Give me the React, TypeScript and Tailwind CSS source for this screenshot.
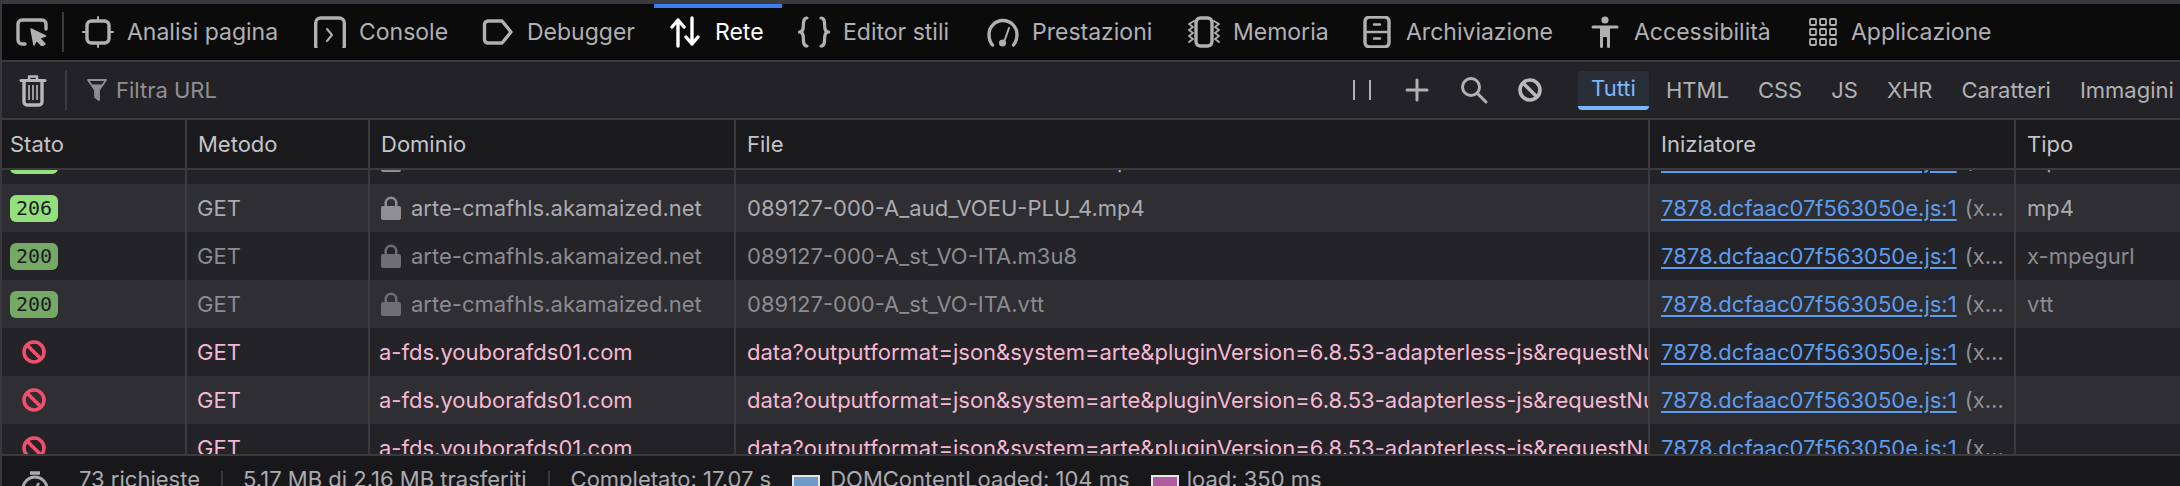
import type { ReactNode } from 'react';

const sans = "font-['Inter','Noto_Sans',sans-serif]";

function Ico({ w = 32, h = 32, children, className = '' }: { w?: number; h?: number; children: ReactNode; className?: string }) {
  return (
    <svg width={w} height={h} viewBox={`0 0 ${w} ${h}`} fill="none" stroke="currentColor" strokeWidth="3.4" strokeLinecap="round" strokeLinejoin="round" className={`shrink-0 ${className}`}>
      {children}
    </svg>
  );
}

const PickerIcon = () => (
  <Ico h={28} w={32}>
    <path d="M9 26H6a4 4 0 0 1-4-4V6a4 4 0 0 1 4-4h20a4 4 0 0 1 4 4v5" />
    <path d="M15 11l14.5 7-6 2 5.5 6-3 2-5.5-6-2.5 5z" fill="currentColor" strokeWidth="1.5" />
  </Ico>
);

const TargetIcon = () => (
  <Ico>
    <rect x="5" y="5" width="22" height="22" rx="4.5" />
    <path d="M16 1v3M16 28v3M1 16h3M28 16h3" strokeWidth="2" />
  </Ico>
);

const ConsoleIcon = () => (
  <Ico>
    <rect x="2" y="2" width="28" height="35" rx="5" className="hidden" />
    <rect x="1.7" y="2" width="28.6" height="33" rx="5" />
    <path d="M13 13l5 6-5 6" strokeWidth="2" />
  </Ico>
);

const DebuggerIcon = () => (
  <Ico>
    <path d="M6 5h14l9 11-9 11H6a3.5 3.5 0 0 1-3.5-3.500V8.500A3.500 3.500 0 0 1 6 5z" />
  </Ico>
);

const NetworkIcon = () => (
  <Ico>
    <path d="M8 30V4M2 11l6-7 6 7M22 2v26M16 21l6 7 6-7" strokeWidth="3.4" />
  </Ico>
);

const StyleIcon = () => (
  <Ico>
    <path d="M9 2C4 2 6 10 5 13c-.5 2-2 3-3.500 3 1.500 0 3 1 3.500 3 1 3-1 11 4 11" strokeWidth="3.2" />
    <path d="M23 2c5 0 3 8 4 11 .5 2 2 3 3.500 3-1.500 0-3 1-3.500 3-1 3 1 11-4 11" strokeWidth="3.2" />
  </Ico>
);

const PerfIcon = () => (
  <Ico>
    <path d="M5.500 29C2.500 25.500 2 22 2 18.500a14 14 0 0 1 28 0c0 3.500-.5 7-3.500 10.500" />
    <path d="M22 12l-5 14" strokeWidth="2" />
    <circle cx="15.500" cy="27" r="3.500" fill="currentColor" stroke="none" />
  </Ico>
);

const MemoryIcon = () => (
  <Ico>
    <rect x="8" y="2" width="16" height="28" rx="4.500" />
    <path d="M6 5L1 8l4 3-4 3 4 3-4 3 4 3-4 3M26 5l5 3-4 3 4 3-4 3 4 3-4 3 4 3" strokeWidth="1.800" />
  </Ico>
);

const StorageIcon = () => (
  <Ico>
    <rect x="4" y="0" width="24" height="30" rx="4.500" transform="translate(0 1)" />
    <path d="M4 16h24M13 8.500h6M13 22.500h6" strokeWidth="2.400" />
  </Ico>
);

const AccessIcon = () => (
  <svg width="32" height="32" viewBox="0 0 32 32" className="shrink-0" fill="currentColor">
    <circle cx="16" cy="4" r="3.600" />
    <path d="M4 9.500h24a1.500 1.500 0 0 1 0 3h-7v18a1.500 1.500 0 0 1-3 0V21h-4v9.500a1.500 1.500 0 0 1-3 0v-18H4a1.500 1.500 0 0 1 0-3z" />
  </svg>
);

const AppIcon = () => (
  <svg width="32" height="32" viewBox="0 0 32 32" className="shrink-0" fill="none" stroke="currentColor" strokeWidth="1.800">
    {[4, 14, 24].map((x) => [3, 13, 23].map((y) => <rect key={`${x}-${y}`} x={x} y={y} width="6" height="6" rx="1" />))}
  </svg>
);

const TrashIcon = () => (
  <Ico w={28} h={34}>
    <path d="M2 7.500h24" strokeWidth="3" />
    <path d="M10 7V3.500h8V7" strokeWidth="2.400" />
    <path d="M5 8v21a3 3 0 0 0 3 3h12a3 3 0 0 0 3-3V8" />
    <path d="M10 12v15M14 12v15M18 12v15" strokeWidth="1.600" strokeLinecap="butt" />
  </Ico>
);

const FilterIcon = () => (
  <svg width="20" height="22" viewBox="0 0 20 22" className="shrink-0">
    <path d="M1 1h18l-7 10v10l-4-3v-7z" fill="none" stroke="#8f8f94" strokeWidth="1.800" strokeLinejoin="round" />
    <path d="M4.500 5.500h11L11.500 11v8.500L8.500 17v-6z" fill="#8f8f94" />
  </svg>
);

const BlockIcon = ({ className = '' }: { className?: string }) => (
  <svg width="24" height="24" viewBox="0 0 24 24" className={`shrink-0 ${className}`} fill="none" stroke="currentColor" strokeWidth="3.600">
    <circle cx="12" cy="12" r="10" />
    <path d="M5 5l14 14" />
  </svg>
);

const LockIcon = ({ className = '' }: { className?: string }) => (
  <svg width="20" height="24" viewBox="0 0 20 24" className={`shrink-0 ${className}`} fill="currentColor">
    <path d="M3.500 10V7a6.500 6.500 0 0 1 13 0v3h1.500a2 2 0 0 1 2 2v10a2 2 0 0 1-2 2H2a2 2 0 0 1-2-2V12a2 2 0 0 1 2-2zM6 10h8V7a4 4 0 0 0-8 0z" />
  </svg>
);

const tabs = [
  { label: 'Analisi pagina', w: 'w-[155px]', icon: <TargetIcon /> },
  { label: 'Console', w: 'w-[91px]', icon: <ConsoleIcon /> },
  { label: 'Debugger', w: 'w-[111px]', icon: <DebuggerIcon /> },
  { label: 'Rete', w: 'w-[51px]', icon: <NetworkIcon />, active: true },
  { label: 'Editor stili', w: 'w-[112px]', icon: <StyleIcon /> },
  { label: 'Prestazioni', w: 'w-[124px]', icon: <PerfIcon /> },
  { label: 'Memoria', w: 'w-[96px]', icon: <MemoryIcon /> },
  { label: 'Archiviazione', w: 'w-[151px]', icon: <StorageIcon /> },
  { label: 'Accessibilità', w: 'w-[140px]', icon: <AccessIcon /> },
  { label: 'Applicazione', w: 'w-[144px]', icon: <AppIcon /> },
];

const filters = ['HTML', 'CSS', 'JS', 'XHR', 'Caratteri', 'Immagini'];

const cols = 'grid grid-cols-[185px_183px_366px_914px_366px_1fr]';
const cell = 'border-r-2 border-[#3a3a3f] flex items-center min-w-0 overflow-hidden whitespace-nowrap';

type Row = { status: string; file: string; type: string; dim?: boolean };

const okRows: Row[] = [
  { status: '206', file: '089127-000-A_aud_VOEU-PLU_3.mp4', type: 'mp4' },
  { status: '206', file: '089127-000-A_aud_VOEU-PLU_4.mp4', type: 'mp4' },
  { status: '200', file: '089127-000-A_st_VO-ITA.m3u8', type: 'x-mpegurl', dim: true },
  { status: '200', file: '089127-000-A_st_VO-ITA.vtt', type: 'vtt', dim: true },
];

const blockedUrl = 'data?outputformat=json&system=arte&pluginVersion=6.8.53-adapterless-js&requestNumber=0.4471';

function Initiator() {
  return (
    <div className={`${cell} pl-[11px]`}>
      <span className="text-[#5c9df0] underline underline-offset-[3px] decoration-[1.5px]">7878.dcfaac07f563050e.js:1</span>
      <span className="ml-2 text-[#8e8e93]">(x…</span>
    </div>
  );
}

function RequestRow({ row, odd, first }: { row: Row; odd: boolean; first?: boolean }) {
  const text = row.dim ? 'text-[#8b8b90]' : 'text-[#ababaf]';
  return (
    <div className={`${cols} h-[48px] ${odd ? 'bg-[#2e2e33]' : 'bg-[#232328]'} ${first ? '-mt-[34px]' : ''} ${text}`}>
      <div className={`${cell} pl-[8px]`}>
        <span className={`h-[27px] w-[48px] rounded-[6px] flex items-center justify-center text-[#1c1c20] text-[20px] font-['DejaVu_Sans_Mono',monospace] ${row.dim ? 'bg-[#76a866]' : 'bg-[#93e07c]'}`}>
          {row.status}
        </span>
      </div>
      <div className={`${cell} pl-[10px]`}>GET</div>
      <div className={`${cell} pl-[11px]`}>
        <LockIcon className={row.dim ? 'text-[#6e6e73]' : 'text-[#8e8e93]'} />
        <span className="ml-[10px]">arte-cmafhls.akamaized.net</span>
      </div>
      <div className={`${cell} pl-[11px]`}>{row.file}</div>
      <Initiator />
      <div className="pl-[11px] flex items-center">{row.type}</div>
    </div>
  );
}

function BlockedRow({ odd }: { odd: boolean }) {
  return (
    <div className={`${cols} h-[48px] ${odd ? 'bg-[#2e2e33]' : 'bg-[#232328]'} text-[#f5b8d2]`}>
      <div className={`${cell} pl-[20px]`}>
        <BlockIcon className="text-[#f0506e]" />
      </div>
      <div className={`${cell} pl-[10px]`}>GET</div>
      <div className={`${cell} pl-[9px]`}>a-fds.youborafds01.com</div>
      <div className={`${cell} pl-[11px]`}>{blockedUrl}</div>
      <Initiator />
      <div />
    </div>
  );
}

const headers = ['Stato', 'Metodo', 'Dominio', 'File', 'Iniziatore', 'Tipo'];

export default function App() {
  return (
    <div className={`${sans} h-[486px] w-[2180px] overflow-hidden bg-[#18181b] text-[22px] border-l-2 border-[#38383d] box-border`}>
      <div className="h-[4px] -ml-[2px] bg-[#3a3a3f]" />

      {/* tab bar */}
      <div className="h-[56px] flex items-center bg-[#0b0b0c] text-[#b1b1b3] text-[23px]">
        <div className="w-[64px] h-full flex items-center pl-[14px] border-r-2 border-transparent relative">
          <PickerIcon />
          <div className="absolute right-0 top-[8px] h-[40px] w-[2px] bg-[#3a3a3f]" />
        </div>
        {tabs.map((t) => (
          <div key={t.label} className={`relative h-full flex items-center px-4 gap-[13px] ${t.active ? 'text-white' : ''}`}>
            {t.active && <div className="absolute left-0 right-0 top-0 h-[4px] bg-[#3b7ff0]" />}
            {t.icon}
            <span className={`${t.w} whitespace-nowrap`}>{t.label}</span>
          </div>
        ))}
      </div>
      <div className="h-[2px] bg-[#3a3a3f]" />

      {/* toolbar */}
      <div className="h-[56px] flex items-center bg-[#232327] text-[#b1b1b3]">
        <div className="w-[1330px] shrink-0 h-full flex items-center">
          <div className="pl-[17px] w-[63px] text-[#b9b9bc]">
            <TrashIcon />
          </div>
          <div className="h-[40px] w-[2px] bg-[#3a3a3f]" />
          <div className="ml-[20px] flex items-center gap-[9px] text-[#8f8f94]">
            <FilterIcon />
            <span>Filtra URL</span>
          </div>
        </div>
        <div className="h-[40px] w-[2px] bg-[#3a3a3f]" />
        <div className="flex items-center ml-[21px]">
          <div className="flex gap-[14px] h-[20px]">
            <div className="w-[2px] bg-[#b1b1b3]" />
            <div className="w-[2px] bg-[#b1b1b3]" />
          </div>
          <svg width="24" height="24" viewBox="0 0 24 24" className="ml-[34px]" stroke="currentColor" strokeWidth="3" strokeLinecap="round">
            <path d="M12 2v20M2 12h20" />
          </svg>
          <svg width="28" height="28" viewBox="0 0 28 28" className="ml-[31px]" fill="none" stroke="currentColor" strokeWidth="3" strokeLinecap="round">
            <circle cx="11" cy="11" r="8.500" />
            <path d="M17.500 17.500L26 26" />
          </svg>
          <BlockIcon className="ml-[30px] text-[#b9b9bc]" />
        </div>
        <div className="ml-[18px] h-[40px] w-[2px] bg-[#3a3a3f]" />
        <div className="ml-[18px] flex items-center gap-[5px] whitespace-nowrap">
          <div className="h-[39px] w-[71px] rounded-[4px] bg-[#2a2e36] border-b-[4px] border-[#7ab6ff] text-[#7ab6ff] flex items-center justify-center">
            Tutti
          </div>
          {filters.map((f) => (
            <div key={f} className="px-3">{f}</div>
          ))}
        </div>
      </div>
      <div className="h-[2px] bg-[#3a3a3f]" />

      {/* column headers */}
      <div className={`${cols} h-[48px] bg-[#1a1a1d] text-[#c4c4c7]`}>
        {headers.map((h, i) => (
          <div key={h} className={`${i < 5 ? cell : 'flex items-center'} ${i === 0 ? 'pl-[8px]' : 'pl-[11px]'}`}>{h}</div>
        ))}
      </div>
      <div className="h-[2px] bg-[#3a3a3f]" />

      {/* requests */}
      <div className="h-[284px] overflow-hidden bg-[#232328]">
        {okRows.map((r, i) => (
          <RequestRow key={r.file} row={r} odd={i % 2 === 1} first={i === 0} />
        ))}
        <BlockedRow odd={false} />
        <BlockedRow odd />
        <BlockedRow odd={false} />
      </div>
      <div className="h-[2px] bg-[#3a3a3f]" />

      {/* status bar */}
      <div className="h-[46px] flex items-center text-[#ababaf] whitespace-nowrap">
        <svg width="28" height="32" viewBox="0 0 28 32" className="ml-[19px] mt-[16px] shrink-0" fill="none" stroke="currentColor" strokeWidth="3">
          <circle cx="14" cy="18" r="12" />
          <path d="M9 2h10" strokeWidth="3.500" />
          <path d="M14 18l4-6" strokeWidth="2.400" />
        </svg>
        <span className="ml-[30px]">73 richieste</span>
        <div className="ml-[21px] h-[32px] mt-[16px] w-[2px] bg-[#3a3a3f]" />
        <span className="ml-[20px]">5.17 MB di 2.16 MB trasferiti</span>
        <div className="ml-[21px] h-[32px] mt-[16px] w-[2px] bg-[#3a3a3f]" />
        <span className="ml-[21px]">Completato: 17.07 s</span>
        <div className="ml-[21px] h-[28px] w-[28px] mt-[20px] bg-[#6b9bc8] border-2 border-b-0 border-[#e6e6e6]" />
        <span className="ml-[10px]">DOMContentLoaded: 104 ms</span>
        <div className="ml-[21px] h-[28px] w-[28px] mt-[20px] bg-[#b05ba0] border-2 border-b-0 border-[#e6e6e6]" />
        <span className="ml-[8px]">load: 350 ms</span>
      </div>
    </div>
  );
}
